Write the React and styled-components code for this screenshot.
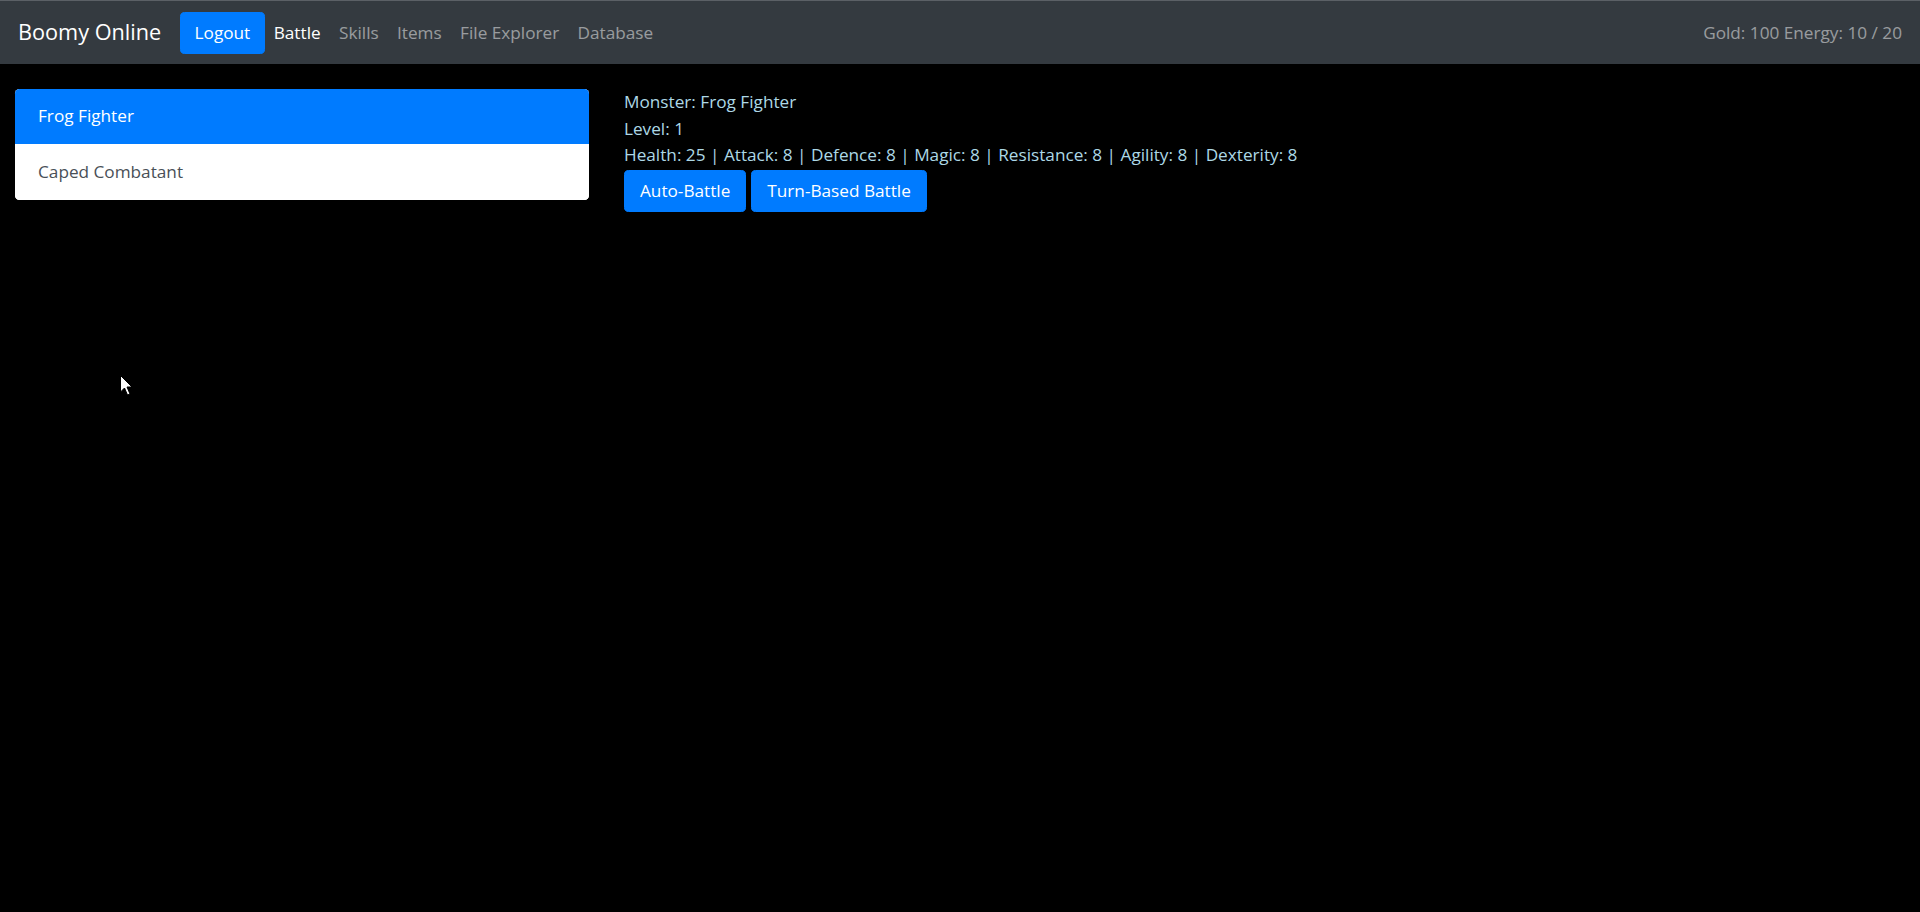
import React from "react";
import styled, { createGlobalStyle } from "styled-components";

const Global = createGlobalStyle`
  html, body { margin: 0; padding: 0; background: #000; }
  body { font-family: "Open Sans", "Noto Sans", sans-serif; font-size: 17.2px; line-height: 1.5; }
  #root { min-height: 912px; position: relative; }
`;

const Nav = styled.nav`
  height: 63px;
  border-top: 1px solid #5b6066;
  background: #343a40;
  display: flex;
  align-items: center;
  padding: 0 18px;
  box-sizing: content-box;
`;

const Brand = styled.span`
  color: #fff;
  font-size: 21.7px;
  margin-right: 19px;
  white-space: nowrap;
`;

const Button = styled.button`
  font-family: inherit;
  font-size: 17.2px;
  line-height: 1.5;
  color: #fff;
  background: #007bff;
  border: 1px solid #007bff;
  border-radius: 4.6px;
  height: 42px;
  padding: 0 ${(p) => p.$px || 15}px;
  cursor: pointer;
`;

const NavLinks = styled.div`
  display: flex;
  align-items: center;
  flex: 1;
  margin-left: 0;
`;

const NavLink = styled.a`
  color: ${(p) => (p.$active ? "#fff" : "rgba(255,255,255,.5)")};
  padding: 0 9.2px;
  text-decoration: none;
  white-space: nowrap;
`;

const Status = styled.span`
  color: rgba(255, 255, 255, 0.5);
  white-space: nowrap;
`;

const Main = styled.main`
  display: flex;
  align-items: flex-start;
  padding: 25px 0 0 15px;
  gap: 35px;
`;

const List = styled.div`
  width: 574px;
  border-radius: 4.6px;
  overflow: hidden;
  display: flex;
  flex-direction: column;
  background: #fff;
`;

const ListItem = styled.div`
  height: 55px;
  box-sizing: border-box;
  padding: 0 23px;
  display: flex;
  align-items: center;
  color: ${(p) => (p.$active ? "#fff" : "#495057")};
  background: ${(p) => (p.$active ? "#007bff" : "#fff")};
  border-bottom: 1px solid ${(p) => (p.$active ? "#007bff" : "rgba(0,0,0,.125)")};
  &:last-child { border-bottom: none; height: 55.5px; }
`;

const Details = styled.section`
  color: #add8e6;
  line-height: 26.5px;
`;

const Line = styled.div``;

const Actions = styled.div`
  display: flex;
  gap: 5px;
  margin-top: 1.5px;
`;

const Cursor = styled.svg`
  position: absolute;
  left: 120px;
  top: 375px;
  pointer-events: none;
`;

export default function App() {
  return (
    <>
      <Global />
      <Nav>
        <Brand>Boomy Online</Brand>
        <Button $px={13.3}>Logout</Button>
        <NavLinks>
          <NavLink $active href="#">Battle</NavLink>
          <NavLink href="#">Skills</NavLink>
          <NavLink href="#">Items</NavLink>
          <NavLink href="#">File Explorer</NavLink>
          <NavLink href="#">Database</NavLink>
        </NavLinks>
        <Status>Gold: 100 Energy: 10 / 20</Status>
      </Nav>
      <Main>
        <List>
          <ListItem $active>Frog Fighter</ListItem>
          <ListItem>Caped Combatant</ListItem>
        </List>
        <Details>
          <Line>Monster: Frog Fighter</Line>
          <Line>Level: 1</Line>
          <Line>
            Health: 25 | Attack: 8 | Defence: 8 | Magic: 8 | Resistance: 8 | Agility: 8 | Dexterity: 8
          </Line>
          <Actions>
            <Button>Auto-Battle</Button>
            <Button>Turn-Based Battle</Button>
          </Actions>
        </Details>
      </Main>
      <Cursor width="13" height="21" viewBox="0 0 13 21">
        <path d="M0.5 0.5 L0.5 17 L4.5 13 L7.5 20 L10 19 L7 12 L12 12 Z" fill="#fff" stroke="#000" strokeWidth="1" />
      </Cursor>
    </>
  );
}
